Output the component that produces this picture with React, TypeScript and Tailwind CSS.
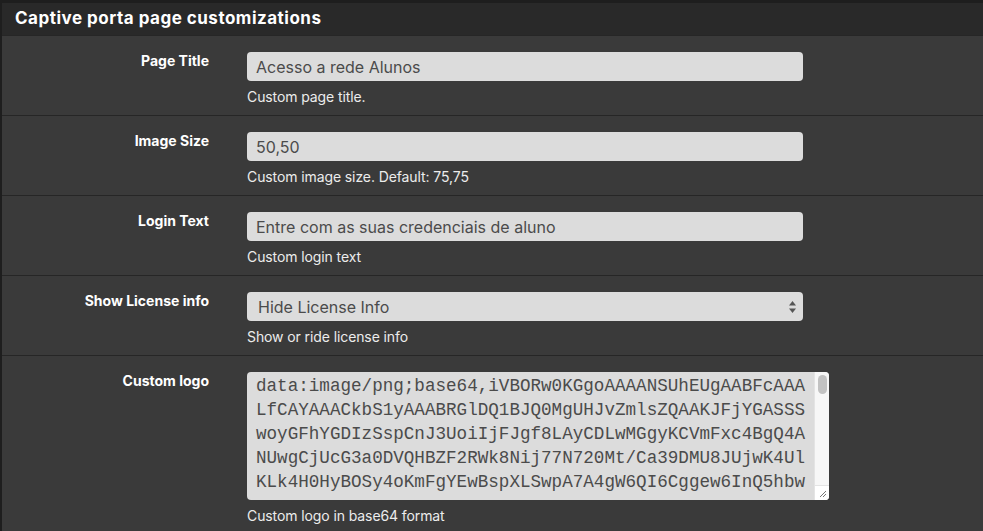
import React from 'react';

const logoLines = [
  'data:image/png;base64,iVBORw0KGgoAAAANSUhEUgAABFcAAA',
  'LfCAYAAACkbS1yAAABRGlDQ1BJQ0MgUHJvZmlsZQAAKJFjYGASSS',
  'woyGFhYGDIzSspCnJ3UoiIjFJgf8LAyCDLwMGgyKCVmFxc4BgQ4A',
  'NUwgCjUcG3a0DVQHBZF2RWk8Nij77N720Mt/Ca39DMU8JUjwK4Ul',
  'KLk4H0HyBOSy4oKmFgYEwBspXLSwpA7A4gW6QI6Cggew6InQ5hbw',
];

function Row({ label, help, children }: { label: string; help: string; children: React.ReactNode }) {
  return (
    <div className="flex border-t border-[#262626]">
      <div className="w-[207px] shrink-0 pt-[15px] text-right text-[14px] font-bold leading-5 text-white">
        {label}
      </div>
      <div className="ml-[38px] flex flex-col pt-4 pb-[8px]">
        {children}
        <div className="mt-[6px] text-[14px] leading-5 tracking-[-0.1px] text-[#ececec]">{help}</div>
      </div>
    </div>
  );
}

function TextInput({ value }: { value: string }) {
  return (
    <div className="flex h-[29px] w-[556px] items-center rounded-[4px] bg-[#dcdcdc] px-[9px] text-[16px] text-[#4b4b4b]">
      {value}
    </div>
  );
}

export default function App() {
  return (
    <div
      className="h-[531px] w-[983px] overflow-hidden border-l-2 border-t-[3px] border-[#1e1e1e] bg-[#3a3a3a]"
      style={{ fontFamily: 'Inter, "Liberation Sans", sans-serif' }}
    >
      {/* Panel header */}
      <div className="flex h-[32px] items-center bg-[#292929] pl-[13px] text-[17px] font-bold tracking-[0.5px] text-white">
        Captive porta page customizations
      </div>

      <Row label="Page Title" help="Custom page title.">
        <TextInput value="Acesso a rede Alunos" />
      </Row>
      <Row label="Image Size" help="Custom image size. Default: 75,75">
        <TextInput value="50,50" />
      </Row>
      <Row label="Login Text" help="Custom login text">
        <TextInput value="Entre com as suas credenciais de aluno" />
      </Row>
      <Row label="Show License info" help="Show or ride license info">
        <div className="flex h-[29px] w-[556px] items-center justify-between rounded-[4px] bg-[#dcdcdc] pl-[11px] pr-[6px] text-[16px] text-[#4b4b4b]">
          <span>Hide License Info</span>
          <svg width="9" height="16" viewBox="0 0 9 16" fill="#555">
            <path d="M4.5 2 L8 6.5 L1 6.5 Z" />
            <path d="M4.5 14 L8 9.5 L1 9.5 Z" />
          </svg>
        </div>
      </Row>
      <Row label="Custom logo" help="Custom logo in base64 format">
        <div className="flex h-[128px] w-[582px] overflow-hidden rounded-[4px] bg-[#dcdcdc]">
          <div
            className="flex-1 overflow-hidden whitespace-pre pl-[9px] pt-[2px] text-[17.6px] leading-[24px] text-[#4b4b4b]"
            style={{ fontFamily: '"Liberation Mono", "Courier New", monospace' }}
          >
            {logoLines.map(l => (
              <div key={l}>{l}</div>
            ))}
          </div>
          <div className="flex w-[15px] flex-col border-l border-[#e4e4e4] bg-[#f7f7f7]">
            <div className="mx-auto mt-[3px] h-[19px] w-[9px] rounded-full bg-[#c2c2c2]" />
            <div className="flex-1" />
            <div className="flex h-[15px] items-end justify-end border-t border-[#e4e4e4] bg-white pb-[2px] pr-[2px]">
              <svg width="8" height="8" viewBox="0 0 8 8" stroke="#777" strokeWidth="1">
                <path d="M1 7 L7 1 M4 7 L7 4" />
              </svg>
            </div>
          </div>
        </div>
      </Row>
    </div>
  );
}
